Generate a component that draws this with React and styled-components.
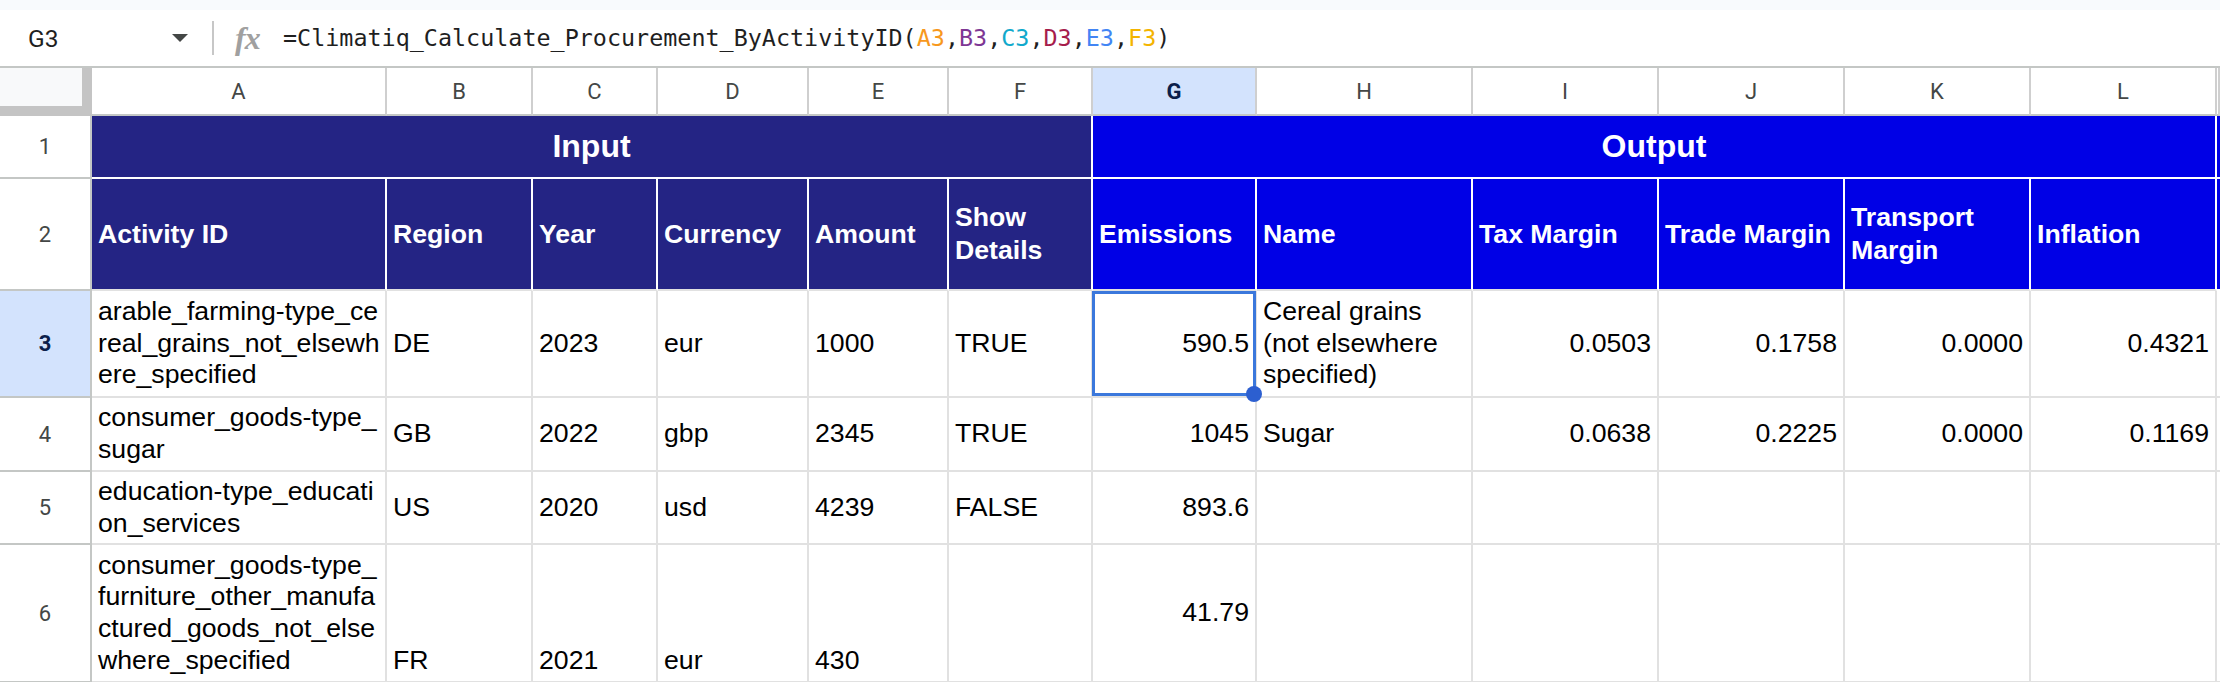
import React from 'react';
import styled, { createGlobalStyle, css } from 'styled-components';

const GlobalStyle = createGlobalStyle`
  html, body {
    margin: 0;
    padding: 0;
    background: #ffffff;
  }
  body {
    width: 2220px;
    height: 682px;
    overflow: hidden;
    font-family: "Liberation Sans", Arial, sans-serif;
  }
`;

const COL_WIDTHS = [295, 146, 125, 151, 140, 144, 164, 216, 186, 186, 186, 186];
const LETTERS = ['A', 'B', 'C', 'D', 'E', 'F', 'G', 'H', 'I', 'J', 'K', 'L'];
const ROW_HEIGHTS = [48, 63, 112, 107, 74, 73, 138];

const tones = {
  navy: '#242484',
  blue: '#0000e6',
};

const GRID = '#e1e1e1';
const HEADER_LINE = '#c4c7c5';

const Page = styled.div`
  width: 2220px;
`;

const TopStrip = styled.div`
  height: 10px;
  background: #f8fafd;
`;

const FormulaBar = styled.div`
  height: 56px;
  display: flex;
  align-items: center;
  background: #ffffff;
`;

const NameBox = styled.div`
  width: 212px;
  box-sizing: border-box;
  padding: 0 24px 0 28px;
  display: flex;
  align-items: center;
  font-family: Roboto, "Liberation Sans", sans-serif;
  font-size: 24.5px;
  color: #1f1f1f;
`;

const DropArrow = styled.span`
  margin-left: auto;
  width: 0;
  height: 0;
  border-left: 8px solid transparent;
  border-right: 8px solid transparent;
  border-top: 8px solid #444746;
`;

const Divider = styled.div`
  width: 2px;
  height: 34px;
  background: #c7c7c7;
`;

const FxIcon = styled.span`
  margin-left: 21px;
  width: 30px;
  font-family: "Liberation Serif", serif;
  font-style: italic;
  font-weight: bold;
  font-size: 32px;
  letter-spacing: -1px;
  color: #a0a0a0;
  line-height: 1;
`;

const FormulaText = styled.div`
  margin-left: 18px;
  font-family: "DejaVu Sans Mono", "Liberation Mono", monospace;
  font-size: 23.4px;
  color: #1f1f1f;
  white-space: nowrap;
`;

const Ref = styled.span`
  color: ${(p) => p.$color};
`;

const Sheet = styled.div`
  display: grid;
  grid-template-columns: 92px ${COL_WIDTHS.map((w) => `${w}px`).join(' ')} 3px;
  grid-template-rows: ${ROW_HEIGHTS.map((h) => `${h}px`).join(' ')};
  border-top: 2px solid ${HEADER_LINE};
  overflow: hidden;
`;

const Corner = styled.div`
  box-sizing: border-box;
  background: #f8f9fa;
  border-right: 10px solid #c4c4c4;
  border-bottom: 10px solid #c4c4c4;
`;

const ColHeader = styled.div`
  box-sizing: border-box;
  display: flex;
  align-items: center;
  justify-content: center;
  border-right: 2px solid #cfcfcf;
  border-bottom: 2px solid ${HEADER_LINE};
  font-family: Roboto, "Liberation Sans", sans-serif;
  font-size: 22px;
  color: #444746;
  background: #ffffff;
  ${(p) =>
    p.$selected &&
    css`
      background: #d3e3fd;
      color: #0b1f4b;
      font-weight: bold;
    `}
`;

const RowHeader = styled.div`
  box-sizing: border-box;
  display: flex;
  align-items: center;
  justify-content: center;
  border-right: 2px solid ${HEADER_LINE};
  border-bottom: 2px solid ${HEADER_LINE};
  font-family: Roboto, "Liberation Sans", sans-serif;
  font-size: 22px;
  color: #444746;
  background: #ffffff;
  ${(p) =>
    p.$selected &&
    css`
      background: #d3e3fd;
      color: #0b1f4b;
      font-weight: bold;
    `}
`;

const BandCell = styled.div`
  grid-column: span ${(p) => p.$span};
  box-sizing: border-box;
  display: flex;
  align-items: center;
  justify-content: center;
  background: ${(p) => tones[p.$tone]};
  border-right: 2px solid #ffffff;
  border-bottom: 2px solid #ffffff;
  color: #ffffff;
  font-weight: bold;
  font-size: 32px;
`;

const HeadCell = styled.div`
  box-sizing: border-box;
  display: flex;
  align-items: center;
  padding: 0 4px 0 6px;
  background: ${(p) => tones[p.$tone]};
  border-right: 2px solid #ffffff;
  border-bottom: 2px solid ${GRID};
  color: #ffffff;
  font-weight: bold;
  font-size: 26.67px;
  line-height: 33px;
`;

const EdgeCell = styled.div`
  box-sizing: border-box;
  background: ${(p) => (p.$tone ? tones[p.$tone] : '#ffffff')};
  border-bottom: 2px solid ${(p) => (p.$tone ? '#ffffff' : GRID)};
`;

const Cell = styled.div`
  position: relative;
  box-sizing: border-box;
  display: flex;
  align-items: ${(p) => (p.$valign === 'bottom' ? 'flex-end' : 'center')};
  justify-content: ${(p) => (p.$align === 'right' ? 'flex-end' : 'flex-start')};
  text-align: ${(p) => (p.$align === 'right' ? 'right' : 'left')};
  padding: 4px ${(p) => (p.$align === 'right' ? '6px' : '4px')} 4px 6px;
  border-right: 2px solid ${GRID};
  border-bottom: 2px solid ${GRID};
  font-size: 26.67px;
  line-height: 31.7px;
  color: #000000;
  word-break: ${(p) => (p.$breakAll ? 'break-all' : 'normal')};
`;

const Selection = styled.div`
  position: absolute;
  top: 0;
  left: -1px;
  right: -1px;
  bottom: 0;
  border: 3px solid #3b78dc;
  z-index: 2;
  pointer-events: none;
`;

const FillHandle = styled.span`
  position: absolute;
  right: -9px;
  bottom: -9px;
  width: 16px;
  height: 16px;
  border-radius: 50%;
  background: #2c5fd0;
`;

const inputHeads = ['Activity ID', 'Region', 'Year', 'Currency', 'Amount', 'Show Details'];
const outputHeads = ['Emissions', 'Name', 'Tax Margin', 'Trade Margin', 'Transport Margin', 'Inflation'];

const L = (text, extra = {}) => ({ text, align: 'left', ...extra });
const R = (text, extra = {}) => ({ text, align: 'right', ...extra });
const E = () => ({ text: '', align: 'left' });

const dataRows = [
  {
    n: 3,
    cells: [
      L('arable_farming-type_cereal_grains_not_elsewhere_specified', { breakAll: true }),
      L('DE'),
      L('2023'),
      L('eur'),
      L('1000'),
      L('TRUE'),
      R('590.5', { selected: true }),
      L('Cereal grains (not elsewhere specified)'),
      R('0.0503'),
      R('0.1758'),
      R('0.0000'),
      R('0.4321'),
    ],
  },
  {
    n: 4,
    cells: [
      L('consumer_goods-type_sugar', { breakAll: true }),
      L('GB'),
      L('2022'),
      L('gbp'),
      L('2345'),
      L('TRUE'),
      R('1045'),
      L('Sugar'),
      R('0.0638'),
      R('0.2225'),
      R('0.0000'),
      R('0.1169'),
    ],
  },
  {
    n: 5,
    cells: [
      L('education-type_education_services', { breakAll: true }),
      L('US'),
      L('2020'),
      L('usd'),
      L('4239'),
      L('FALSE'),
      R('893.6'),
      E(),
      E(),
      E(),
      E(),
      E(),
    ],
  },
  {
    n: 6,
    cells: [
      L('consumer_goods-type_furniture_other_manufactured_goods_not_elsewhere_specified', {
        breakAll: true,
      }),
      L('FR', { valign: 'bottom' }),
      L('2021', { valign: 'bottom' }),
      L('eur', { valign: 'bottom' }),
      L('430', { valign: 'bottom' }),
      E(),
      R('41.79'),
      E(),
      E(),
      E(),
      E(),
      E(),
    ],
  },
];

const FormulaLine = () => (
  <FormulaText>
    =Climatiq_Calculate_Procurement_ByActivityID(
    <Ref $color="#f7981d">A3</Ref>,<Ref $color="#7e3794">B3</Ref>,
    <Ref $color="#11a9cc">C3</Ref>,<Ref $color="#a61d4c">D3</Ref>,
    <Ref $color="#4285f4">E3</Ref>,<Ref $color="#f4b400">F3</Ref>)
  </FormulaText>
);

export default function App() {
  return (
    <Page>
      <GlobalStyle />
      <TopStrip />
      <FormulaBar>
        <NameBox>
          G3
          <DropArrow />
        </NameBox>
        <Divider />
        <FxIcon>fx</FxIcon>
        <FormulaLine />
      </FormulaBar>

      <Sheet>
        <Corner />
        {LETTERS.map((l) => (
          <ColHeader key={l} $selected={l === 'G'}>
            {l}
          </ColHeader>
        ))}
        <ColHeader />

        <RowHeader>1</RowHeader>
        <BandCell $span={6} $tone="navy">
          Input
        </BandCell>
        <BandCell $span={6} $tone="blue">
          Output
        </BandCell>
        <EdgeCell $tone="blue" />

        <RowHeader>2</RowHeader>
        {inputHeads.map((h) => (
          <HeadCell key={h} $tone="navy">
            {h}
          </HeadCell>
        ))}
        {outputHeads.map((h) => (
          <HeadCell key={h} $tone="blue">
            {h}
          </HeadCell>
        ))}
        <EdgeCell $tone="blue" />

        {dataRows.map((row) => (
          <React.Fragment key={row.n}>
            <RowHeader $selected={row.n === 3}>{row.n}</RowHeader>
            {row.cells.map((c, i) => (
              <Cell
                key={i}
                $align={c.align}
                $valign={c.valign}
                $breakAll={c.breakAll}
              >
                {c.text}
                {c.selected && (
                  <Selection>
                    <FillHandle />
                  </Selection>
                )}
              </Cell>
            ))}
            <EdgeCell />
          </React.Fragment>
        ))}
      </Sheet>
    </Page>
  );
}
